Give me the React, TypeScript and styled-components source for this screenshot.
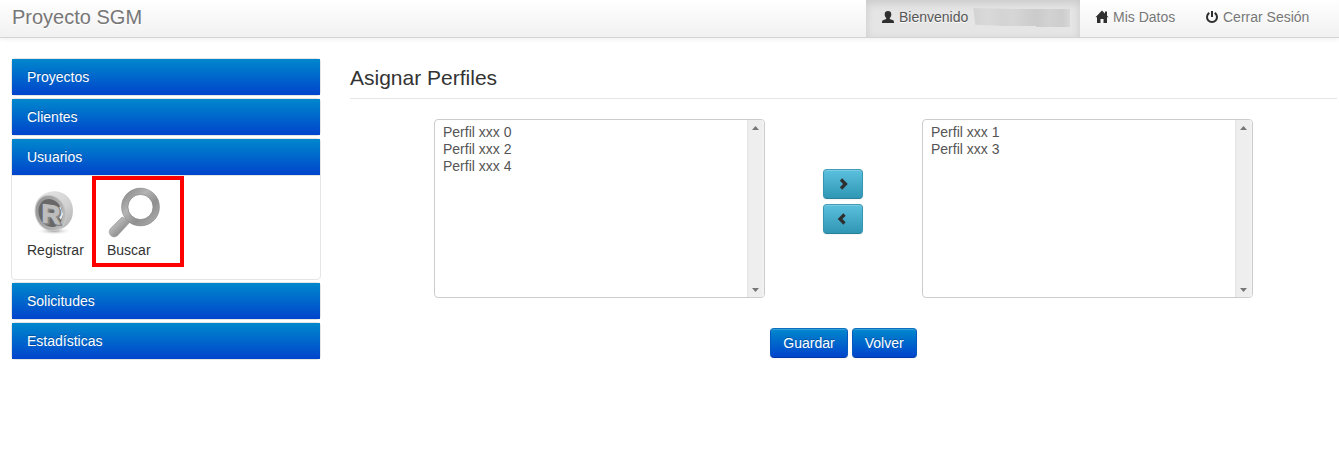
import React from 'react';
import styled, { createGlobalStyle } from 'styled-components';

const GlobalStyle = createGlobalStyle`
  * { box-sizing: border-box; }
  body {
    margin: 0;
    background: #fff;
    color: #333;
    font: 14px/20px "Liberation Sans", Arial, sans-serif;
    overflow: hidden;
  }
`;

const Navbar = styled.header`
  display: flex;
  justify-content: space-between;
  height: 38px;
  padding: 0 13px 0 12px;
  background: linear-gradient(#fff, #f1f1f1);
  border-bottom: 1px solid #d4d4d4;
  box-shadow: 0 1px 5px rgba(0, 0, 0, 0.07);
`;

const Brand = styled.div`
  color: #777;
  font-size: 20px;
  line-height: 20px;
  padding-top: 7px;
  text-shadow: 0 1px 0 #fff;
`;

const Nav = styled.nav`
  display: flex;
`;

const NavItem = styled.a<{ $active?: boolean; $width: number }>`
  display: flex;
  width: ${(p) => p.$width}px;
  padding: 7px 0 0 15px;
  color: ${(p) => (p.$active ? '#555' : '#777')};
  background: ${(p) => (p.$active ? '#e5e5e5' : 'transparent')};
  box-shadow: ${(p) => (p.$active ? 'inset 0 3px 8px rgba(0, 0, 0, 0.125)' : 'none')};
  text-shadow: 0 1px 0 #fff;
  white-space: nowrap;
`;

const NavIcon = styled.svg`
  width: 14px;
  height: 14px;
  margin: 3px 4px 0 0;
  fill: #2f2f2f;
  flex: none;
`;

const HiddenName = styled.span`
  width: 97px;
  height: 19px;
  margin: 1px 0 0 5px;
  background: linear-gradient(90deg, #d3d3d3, #d9d9d9 15%, #d4d4d4 30%, #d6d6d6 42%, #cecece 58%, #cbcbcb 66%, #d2d2d2 78%, #cdcdcd 92%, #d8d8d8);
  clip-path: polygon(0 0, 40% 5%, 100% 5%, 100% 100%, 65% 100%, 65% 95%, 30% 95%, 2% 88%);
`;

const Page = styled.div`
  display: flex;
  gap: 29px;
  padding: 20px 2px 0 11px;
`;

const Sidebar = styled.aside`
  display: flex;
  flex-direction: column;
  gap: 2px;
  width: 310px;
  flex: none;
`;

const Group = styled.section`
  border: 1px solid #e5e5e5;
  border-radius: 4px;
`;

const GroupHeading = styled.div`
  height: 36px;
  padding: 8px 15px;
  color: #fff;
  background: linear-gradient(#08c, #04c);
  text-shadow: 0 -1px 0 rgba(0, 0, 0, 0.25);
`;

const GroupBody = styled.div`
  display: flex;
  height: 104px;
  border-top: 1px solid #e5e5e5;
`;

const Shortcut = styled.a<{ $highlighted?: boolean }>`
  display: flex;
  flex-direction: column;
  width: ${(p) => (p.$highlighted ? 92 : 80)}px;
  height: 91px;
  padding: ${(p) => (p.$highlighted ? '5px 11px' : '9px 0 0 15px')};
  border: ${(p) => (p.$highlighted ? '4px solid #f00' : '0')};
  color: #333;
`;

const Shortcuts = styled.div`
  display: grid;
  grid-template-columns: 80px 92px;
`;

const ShortcutArt = styled.svg`
  display: block;
  width: 55px;
  height: 55px;
  flex: none;
`;

const HighlightedCell = styled.div`
  width: 92px;
`;

const Main = styled.main`
  flex: 1;
`;

const Title = styled.h1`
  margin: 0 0 20px;
  height: 41px;
  font-size: 21px;
  font-weight: 400;
  line-height: 40px;
  border-bottom: 1px solid #e5e5e5;
`;

const Transfer = styled.div`
  display: flex;
  justify-content: center;
`;

const ListBox = styled.div`
  display: flex;
  width: 331px;
  height: 179px;
  border: 1px solid #ccc;
  border-radius: 4px;
  overflow: hidden;
`;

const Options = styled.ul`
  flex: 1;
  margin: 0;
  padding: 4px 8px;
  list-style: none;
  color: #555;
`;

const Option = styled.li`
  height: 17px;
  line-height: 17px;
`;

const Scrollbar = styled.div`
  display: flex;
  flex-direction: column;
  justify-content: space-between;
  align-items: center;
  width: 17px;
  padding: 6px 0 5px;
  background: linear-gradient(90deg, #e3e3e3, #eee 15%, #eee 80%, #f3f3f3);
`;

const ScrollArrow = styled.svg`
  width: 7px;
  height: 4px;
  fill: #777;
`;

const MoveButtons = styled.div`
  display: flex;
  flex-direction: column;
  gap: 5px;
  width: 157px;
  padding: 50px 0 0 58px;
`;

const Button = styled.button<{ $info?: boolean }>`
  display: flex;
  align-items: center;
  justify-content: center;
  width: ${(p) => (p.$info ? '40px' : 'auto')};
  height: 30px;
  padding: 0 12px;
  font: inherit;
  color: #fff;
  border: 1px solid;
  border-color: ${(p) => (p.$info ? '#429cb6 #3695b0 #28809a' : '#0a6fc0 #0558bd #003aa8')};
  border-radius: 4px;
  background: ${(p) => (p.$info ? 'linear-gradient(#5bc0de, #2f96b4)' : 'linear-gradient(#08c, #04c)')};
  text-shadow: 0 -1px 0 rgba(0, 0, 0, 0.25);
  box-shadow: inset 0 1px 0 rgba(255, 255, 255, 0.2), 0 1px 2px rgba(0, 0, 0, 0.05);
`;

const Chevron = styled.svg`
  width: 14px;
  height: 14px;
  flex: none;
  fill: none;
  stroke: #2f2f2f;
  stroke-width: 3.2;
`;

const Actions = styled.div`
  display: flex;
  justify-content: center;
  gap: 4px;
  margin-top: 30px;
`;

function RegisteredArt() {
  return (
    <ShortcutArt viewBox="0 0 55 55">
      <defs>
        <linearGradient id="coinSide" x1="0" y1="0" x2="1" y2="1">
          <stop offset="0" stopColor="#e8e8e8" />
          <stop offset=".6" stopColor="#d2d2d2" />
          <stop offset="1" stopColor="#aaa" />
        </linearGradient>
        <linearGradient id="coinFace" x1="0" y1="0" x2="1" y2="1">
          <stop offset="0" stopColor="#8e8e8e" />
          <stop offset="1" stopColor="#c4c4c4" />
        </linearGradient>
        <radialGradient id="coinShadow">
          <stop offset="0" stopColor="#999" />
          <stop offset="1" stopColor="#fff" stopOpacity="0" />
        </radialGradient>
      </defs>
      <ellipse cx="27" cy="46" rx="18" ry="4" fill="url(#coinShadow)" />
      <path d="M22 7C32 4 42 9 45 19C48 30 44 40 34 44L25 46C15 44 8 34 8 24C8 16 13 9 22 7Z" fill="url(#coinSide)" />
      <ellipse cx="23.5" cy="28" rx="15" ry="18" transform="rotate(-20 23.5 28)" fill="url(#coinFace)" stroke="#c9c9c9" />
      <ellipse cx="23.5" cy="28" rx="11.7" ry="14.3" transform="rotate(-20 23.5 28)" fill="#686868" />
      <path d="M33 21L36 29L34 35L30 29Z" fill="#f7f7f7" />
      <g fontFamily="Liberation Sans" fontWeight="700" fontSize="26" strokeLinejoin="round">
        <text transform="translate(16 38) skewY(7)" fill="#888" stroke="#888" strokeWidth="2">R</text>
        <text transform="translate(14.5 37) skewY(7)" fill="#bdbdbd" stroke="#bdbdbd">R</text>
      </g>
    </ShortcutArt>
  );
}

function SearchArt() {
  return (
    <ShortcutArt viewBox="0 0 55 55">
      <defs>
        <linearGradient id="lens" x1="0" y1="0" x2="1" y2="1">
          <stop offset="0" stopColor="#8a8a8a" />
          <stop offset=".35" stopColor="#b4b4b4" />
          <stop offset=".65" stopColor="#909090" />
          <stop offset="1" stopColor="#aaa" />
        </linearGradient>
      </defs>
      <path d="M15 32L3.5 43.5C-.5 48 5.500 55 10.500 50.500L24 36Z" fill="url(#lens)" stroke="#999" strokeWidth=".6" />
      <circle cx="33.500" cy="22" r="15.800" fill="none" stroke="url(#lens)" strokeWidth="6.600" />
      <circle cx="33.500" cy="22" r="12.600" fill="none" stroke="#808080" strokeWidth=".7" />
      <circle cx="33.500" cy="22" r="18.900" fill="none" stroke="#8c8c8c" strokeWidth=".5" />
    </ShortcutArt>
  );
}

function ProfileList({ items }: { items: string[] }) {
  return (
    <ListBox>
      <Options>
        {items.map((item) => (
          <Option key={item}>{item}</Option>
        ))}
      </Options>
      <Scrollbar>
        <ScrollArrow viewBox="0 0 7 4"><path d="M0 4L3.5 0L7 4Z" /></ScrollArrow>
        <ScrollArrow viewBox="0 0 7 4"><path d="M0 0H7L3.5 4Z" /></ScrollArrow>
      </Scrollbar>
    </ListBox>
  );
}

export default function App() {
  return (
    <>
      <GlobalStyle />
      <Navbar>
        <Brand>Proyecto SGM</Brand>
        <Nav>
          <NavItem $active $width={214}>
            <NavIcon viewBox="0 0 14 14">
              <path d="M7 1C9 1 10.300 2.200 10.300 4.200C10.300 6 9.600 7.100 8.800 8V9L12 10.200C12.800 10.500 13 11 13 13H1C1 11 1.200 10.500 2 10.200L5.200 9V8C4.400 7.100 3.700 6 3.700 4.200C3.700 2.200 5 1 7 1Z" />
            </NavIcon>
            Bienvenido
            <HiddenName />
          </NavItem>
          <NavItem $width={110}>
            <NavIcon viewBox="0 0 14 14">
              <path d="M7 .5L13.500 7.300H12V13H8.500V9H5.500V13H2V7.300H.5Z" />
              <path d="M10 1.500H12V6H10Z" />
            </NavIcon>
            Mis Datos
          </NavItem>
          <NavItem $width={136}>
            <NavIcon viewBox="0 0 14 14">
              <path d="M4.300 2.900A5 5 0 1 0 9.700 2.900" fill="none" stroke="#2f2f2f" strokeWidth="2" />
              <path d="M6 1H8V7H6Z" />
            </NavIcon>
            Cerrar Sesión
          </NavItem>
        </Nav>
      </Navbar>
      <Page>
        <Sidebar>
          <Group><GroupHeading>Proyectos</GroupHeading></Group>
          <Group><GroupHeading>Clientes</GroupHeading></Group>
          <Group>
            <GroupHeading>Usuarios</GroupHeading>
            <GroupBody>
              <Shortcuts>
                <Shortcut><RegisteredArt />Registrar</Shortcut>
                <HighlightedCell>
                  <Shortcut $highlighted><SearchArt />Buscar</Shortcut>
                </HighlightedCell>
              </Shortcuts>
            </GroupBody>
          </Group>
          <Group><GroupHeading>Solicitudes</GroupHeading></Group>
          <Group><GroupHeading>Estadísticas</GroupHeading></Group>
        </Sidebar>
        <Main>
          <Title>Asignar Perfiles</Title>
          <Transfer>
            <ProfileList items={['Perfil xxx 0', 'Perfil xxx 2', 'Perfil xxx 4']} />
            <MoveButtons>
              <Button $info aria-label="Agregar">
                <Chevron viewBox="0 0 14 14"><path d="M5 2.500L9.500 7L5 11.500" /></Chevron>
              </Button>
              <Button $info aria-label="Quitar">
                <Chevron viewBox="0 0 14 14"><path d="M8.500 2.500L4 7L8.500 11.500" /></Chevron>
              </Button>
            </MoveButtons>
            <ProfileList items={['Perfil xxx 1', 'Perfil xxx 3']} />
          </Transfer>
          <Actions>
            <Button>Guardar</Button>
            <Button>Volver</Button>
          </Actions>
        </Main>
      </Page>
    </>
  );
}
